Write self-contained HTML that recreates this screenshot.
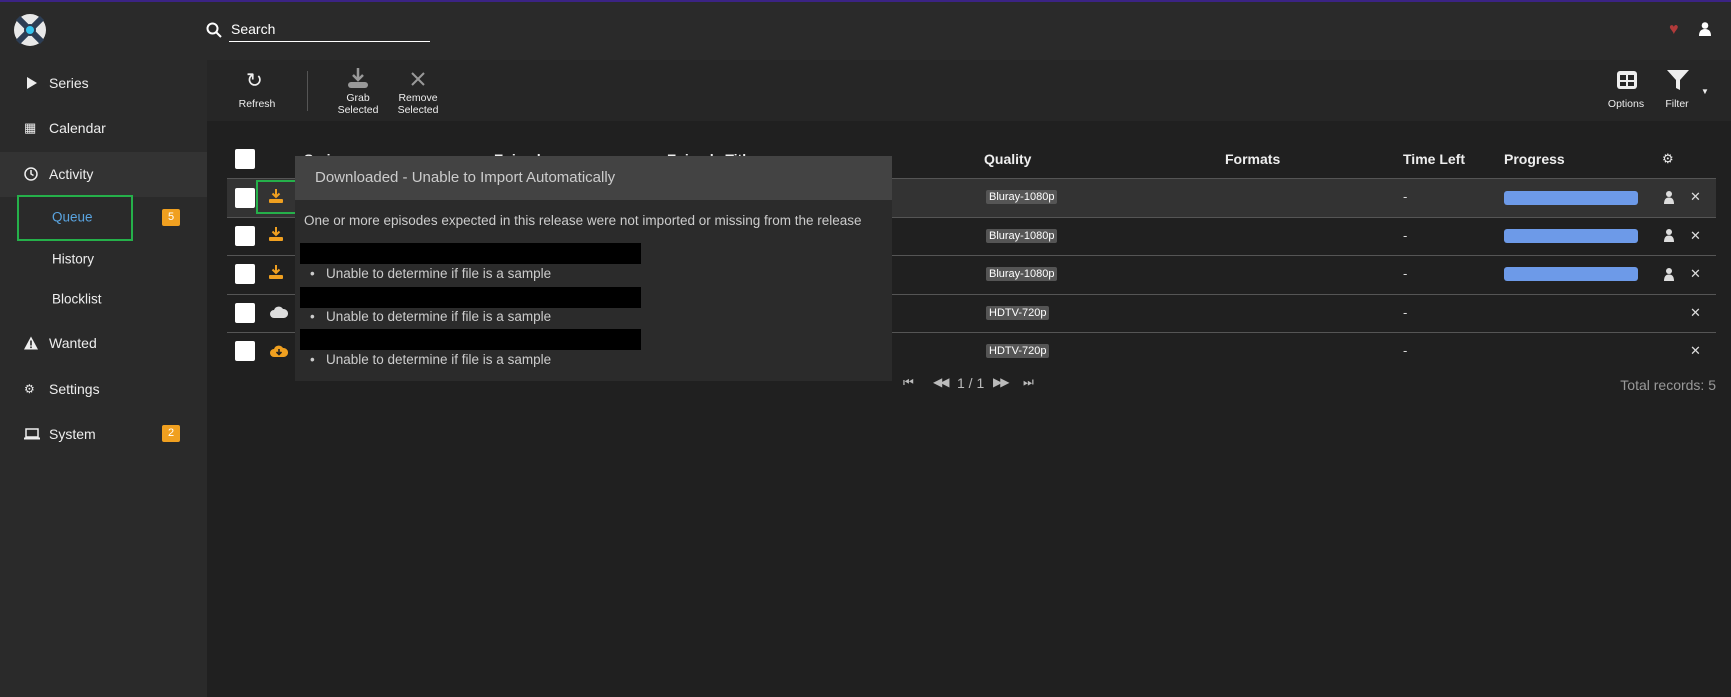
<!DOCTYPE html>
<html><head><meta charset="utf-8"><style>
*{box-sizing:border-box;margin:0;padding:0}
body{width:1731px;height:697px;background:#202020;font-family:"Liberation Sans",sans-serif;color:#ccc;position:relative;overflow:hidden;font-size:13px}
.a{position:absolute}
.top{left:0;top:0;width:1731px;height:60px;background:#2a2a2a;border-top:2px solid #3b2384}
.side{left:0;top:60px;width:207px;height:637px;background:#2a2a2a}
.nav{left:49px;color:#eee;font-size:14px;transform:translateY(-50%)}
.sub{left:52px;font-size:13.5px;color:#eee;transform:translateY(-50%)}
.ic{left:24px;transform:translateY(-50%)}
.badge{background:#f0a020;color:#fff;font-size:11px;width:18px;height:17px;text-align:center;line-height:17px;border-radius:2px}
.tb{left:207px;top:60px;width:1524px;height:61px;background:#262626}
.tl{color:#eee;font-size:10.5px;text-align:center;line-height:12px;transform:translateX(-50%)}
.th{color:#eee;font-size:14px;font-weight:bold;top:151px}
.cb{width:20px;height:20px;background:#fff;border-radius:2px;left:235px}
.line{left:227px;width:1489px;height:1px;background:#555}
.q{background:#555;color:#fff;font-size:11px;padding:1px 3px;border-radius:2px;left:986px}
.pb{left:1504px;width:134px;height:14px;background:#6d9ae8;border-radius:3px}
.x{left:1690px;color:#ddd;font-size:13px}
.dash{left:1403px;color:#ddd}
.tip{left:295px;top:156px;width:597px;height:225px;background:#2b2b2b}
.tiph{left:0;top:0;width:597px;height:44px;background:#434343;color:#ccc;font-size:15px;padding:13px 20px}
.blk{background:#000;left:5px;width:341px;height:21px}
.bl{left:15px;color:#ccc;font-size:13.5px}
</style></head><body>
<div class="a top"></div>
<svg class="a" style="left:13px;top:13px" width="34" height="34" viewBox="0 0 34 34"><circle cx="17" cy="17" r="16" fill="#e8e8e8"/><path d="M5 5 L29 29 M29 5 L5 29" stroke="#2d3e55" stroke-width="6"/><circle cx="17" cy="17" r="6" fill="#2d3e55"/><circle cx="17" cy="17" r="4" fill="#35c5f0"/></svg>
<svg class="a" style="left:206px;top:22px" width="16" height="16" viewBox="0 0 16 16"><circle cx="6.5" cy="6.5" r="5" stroke="#fff" stroke-width="2" fill="none"/><path d="M10 10 L15 15" stroke="#fff" stroke-width="2"/></svg>
<div class="a" style="left:231px;top:21px;color:#fff;font-size:14px">Search</div>
<div class="a" style="left:229px;top:41px;width:201px;height:1px;background:#fff"></div>
<div class="a" style="left:1669px;top:21px;color:#b03a3a;font-size:16px">♥</div>
<svg class="a" style="left:1699px;top:22px" width="12" height="14" viewBox="0 0 12 14"><circle cx="6" cy="3.5" r="3.3" fill="#fff"/><path d="M0 14 Q0 7 6 7 Q12 7 12 14Z" fill="#fff"/></svg>

<div class="a side"></div>
<div class="a" style="left:0;top:152px;width:207px;height:45px;background:#333"></div>
<svg class="a ic" style="top:83px;left:27px" width="10" height="12"><path d="M0 0L10 6L0 12Z" fill="#eee"/></svg>
<div class="a nav" style="top:83px">Series</div>
<div class="a ic" style="top:128px;font-size:13px;color:#eee">▦</div>
<div class="a nav" style="top:128px">Calendar</div>
<svg class="a ic" style="top:174px" width="14" height="14"><circle cx="7" cy="7" r="6" stroke="#eee" stroke-width="1.5" fill="none"/><path d="M7 3V7L9.5 8.5" stroke="#eee" stroke-width="1.5" fill="none"/></svg>
<div class="a nav" style="top:174px">Activity</div>
<div class="a" style="left:17px;top:195px;width:116px;height:46px;border:2px solid #25b04a"></div>
<div class="a sub" style="top:217px;color:#5aa4e0">Queue</div>
<div class="a badge" style="left:162px;top:209px">5</div>
<div class="a sub" style="top:259px">History</div>
<div class="a sub" style="top:299px">Blocklist</div>
<svg class="a ic" style="top:343px" width="14" height="13"><path d="M7 0L14 13H0Z" fill="#eee"/><rect x="6.2" y="4" width="1.6" height="5" fill="#2a2a2a"/><rect x="6.2" y="10" width="1.6" height="1.6" fill="#2a2a2a"/></svg>
<div class="a nav" style="top:343px">Wanted</div>
<div class="a ic" style="top:389px;font-size:12px;color:#eee">⚙</div>
<div class="a nav" style="top:389px">Settings</div>
<svg class="a ic" style="top:434px" width="16" height="12"><rect x="2" y="1" width="12" height="8" stroke="#eee" stroke-width="1.5" fill="none"/><rect x="0" y="9.5" width="16" height="2" fill="#eee"/></svg>
<div class="a nav" style="top:434px">System</div>
<div class="a badge" style="left:162px;top:425px">2</div>

<div class="a tb"></div>
<div class="a" style="left:246px;top:68px;color:#eee;font-size:20px">↻</div>
<div class="a tl" style="left:257px;top:98px">Refresh</div>
<div class="a" style="left:307px;top:71px;width:1px;height:40px;background:#555"></div>
<svg class="a" style="left:348px;top:68px" width="20" height="22"><path d="M10 0V12M5 7L10 12L15 7" stroke="#999" stroke-width="2.5" fill="none"/><rect x="0" y="14" width="20" height="6" rx="3" fill="#999"/></svg>
<div class="a tl" style="left:358px;top:92px">Grab<br>Selected</div>
<svg class="a" style="left:411px;top:72px" width="14" height="14"><path d="M1 1L13 13M13 1L1 13" stroke="#999" stroke-width="2"/></svg>
<div class="a tl" style="left:418px;top:92px">Remove<br>Selected</div>
<svg class="a" style="left:1616px;top:70px" width="22" height="20"><rect x="1" y="1" width="20" height="18" rx="3" fill="#eee"/><rect x="4" y="5" width="6" height="5" fill="#262626"/><rect x="12" y="5" width="6" height="5" fill="#262626"/><rect x="4" y="12" width="6" height="4" fill="#262626"/><rect x="12" y="12" width="6" height="4" fill="#262626"/></svg>
<div class="a tl" style="left:1626px;top:98px">Options</div>
<svg class="a" style="left:1667px;top:70px" width="22" height="20"><path d="M0 0H22L13 10V20L9 18V10Z" fill="#eee"/></svg>
<div class="a tl" style="left:1677px;top:98px">Filter</div>
<div class="a" style="left:1701px;top:87px;font-size:8px;color:#eee">▼</div>

<div class="a cb" style="top:149px"></div>
<div class="a th" style="left:304px">Series</div>
<div class="a th" style="left:494px">Episode</div>
<div class="a th" style="left:667px">Episode Title</div>
<div class="a th" style="left:984px">Quality</div>
<div class="a th" style="left:1225px">Formats</div>
<div class="a th" style="left:1403px">Time Left</div>
<div class="a th" style="left:1504px">Progress</div>
<div class="a" style="left:1662px;top:151px;color:#eee;font-size:13px">⚙</div>
<div class="a" style="left:227px;top:179px;width:1489px;height:38px;background:#333"></div>
<div class="a line" style="top:178px"></div>
<div class="a line" style="top:217px"></div>
<div class="a line" style="top:255px"></div>
<div class="a line" style="top:294px"></div>
<div class="a line" style="top:332px"></div>

<div class="a cb" style="top:188px"></div>
<div class="a cb" style="top:226px"></div>
<div class="a cb" style="top:264px"></div>
<div class="a cb" style="top:303px"></div>
<div class="a cb" style="top:341px"></div>
<svg class="a" style="left:269px;top:188px" width="14" height="16"><path d="M7 1V9M3.5 5.5L7 9L10.5 5.5" stroke="#f0a020" stroke-width="2" fill="none"/><rect x="0" y="11" width="14" height="4" rx="1" fill="#f0a020"/></svg>
<svg class="a" style="left:269px;top:226px" width="14" height="16"><path d="M7 1V9M3.5 5.5L7 9L10.5 5.5" stroke="#f0a020" stroke-width="2" fill="none"/><rect x="0" y="11" width="14" height="4" rx="1" fill="#f0a020"/></svg>
<svg class="a" style="left:269px;top:264px" width="14" height="16"><path d="M7 1V9M3.5 5.5L7 9L10.5 5.5" stroke="#f0a020" stroke-width="2" fill="none"/><rect x="0" y="11" width="14" height="4" rx="1" fill="#f0a020"/></svg>
<svg class="a" style="left:270px;top:306px" width="18" height="12"><path d="M4 12A4 4 0 0 1 4 4A5 5 0 0 1 13 3A4.5 4.5 0 0 1 14 12Z" fill="#ddd"/></svg>
<svg class="a" style="left:270px;top:344px" width="18" height="13"><path d="M4 13A4 4 0 0 1 4 5A5 5 0 0 1 13 4A4.5 4.5 0 0 1 14 13Z" fill="#f0a020"/><path d="M9 5V10M6.5 8L9 10.5L11.5 8" stroke="#202020" stroke-width="1.6" fill="none"/></svg>
<div class="a" style="left:256px;top:180px;width:41px;height:34px;border:2px solid #25b04a"></div>

<div class="a q" style="top:190px">Bluray-1080p</div>
<div class="a q" style="top:229px">Bluray-1080p</div>
<div class="a q" style="top:267px">Bluray-1080p</div>
<div class="a q" style="top:306px">HDTV-720p</div>
<div class="a q" style="top:344px">HDTV-720p</div>
<div class="a dash" style="top:189px">-</div>
<div class="a dash" style="top:228px">-</div>
<div class="a dash" style="top:266px">-</div>
<div class="a dash" style="top:305px">-</div>
<div class="a dash" style="top:343px">-</div>
<div class="a pb" style="top:191px"></div>
<div class="a pb" style="top:229px"></div>
<div class="a pb" style="top:267px"></div>
<svg class="a" style="left:1664px;top:191px" width="10" height="13"><circle cx="5" cy="3" r="3" fill="#ddd"/><path d="M0 13Q0 6.5 5 6.5Q10 6.5 10 13Z" fill="#ddd"/></svg>
<svg class="a" style="left:1664px;top:229px" width="10" height="13"><circle cx="5" cy="3" r="3" fill="#ddd"/><path d="M0 13Q0 6.5 5 6.5Q10 6.5 10 13Z" fill="#ddd"/></svg>
<svg class="a" style="left:1664px;top:268px" width="10" height="13"><circle cx="5" cy="3" r="3" fill="#ddd"/><path d="M0 13Q0 6.5 5 6.5Q10 6.5 10 13Z" fill="#ddd"/></svg>
<div class="a x" style="top:189px">✕</div>
<div class="a x" style="top:228px">✕</div>
<div class="a x" style="top:266px">✕</div>
<div class="a x" style="top:305px">✕</div>
<div class="a x" style="top:343px">✕</div>

<div class="a" style="left:903px;top:375px;color:#bbb;font-size:12px;letter-spacing:-2px">⏮</div>
<div class="a" style="left:933px;top:375px;color:#bbb;font-size:12px;letter-spacing:-2px">◀◀</div>
<div class="a" style="left:957px;top:375px;color:#bbb;font-size:14px">1 / 1</div>
<div class="a" style="left:993px;top:375px;color:#bbb;font-size:12px;letter-spacing:-2px">▶▶</div>
<div class="a" style="left:1023px;top:375px;color:#bbb;font-size:12px">⏭</div>
<div class="a" style="right:15px;top:377px;color:#999;font-size:14px">Total records: 5</div>

<div class="a tip">
<div class="a tiph">Downloaded - Unable to Import Automatically</div>
<div class="a" style="left:9px;top:57px;color:#ccc;font-size:13.5px">One or more episodes expected in this release were not imported or missing from the release</div>
<div class="a blk" style="top:87px"></div>
<div class="a bl" style="top:110px">•&nbsp;&nbsp; Unable to determine if file is a sample</div>
<div class="a blk" style="top:131px"></div>
<div class="a bl" style="top:153px">•&nbsp;&nbsp; Unable to determine if file is a sample</div>
<div class="a blk" style="top:173px"></div>
<div class="a bl" style="top:196px">•&nbsp;&nbsp; Unable to determine if file is a sample</div>
</div>
</body></html>
